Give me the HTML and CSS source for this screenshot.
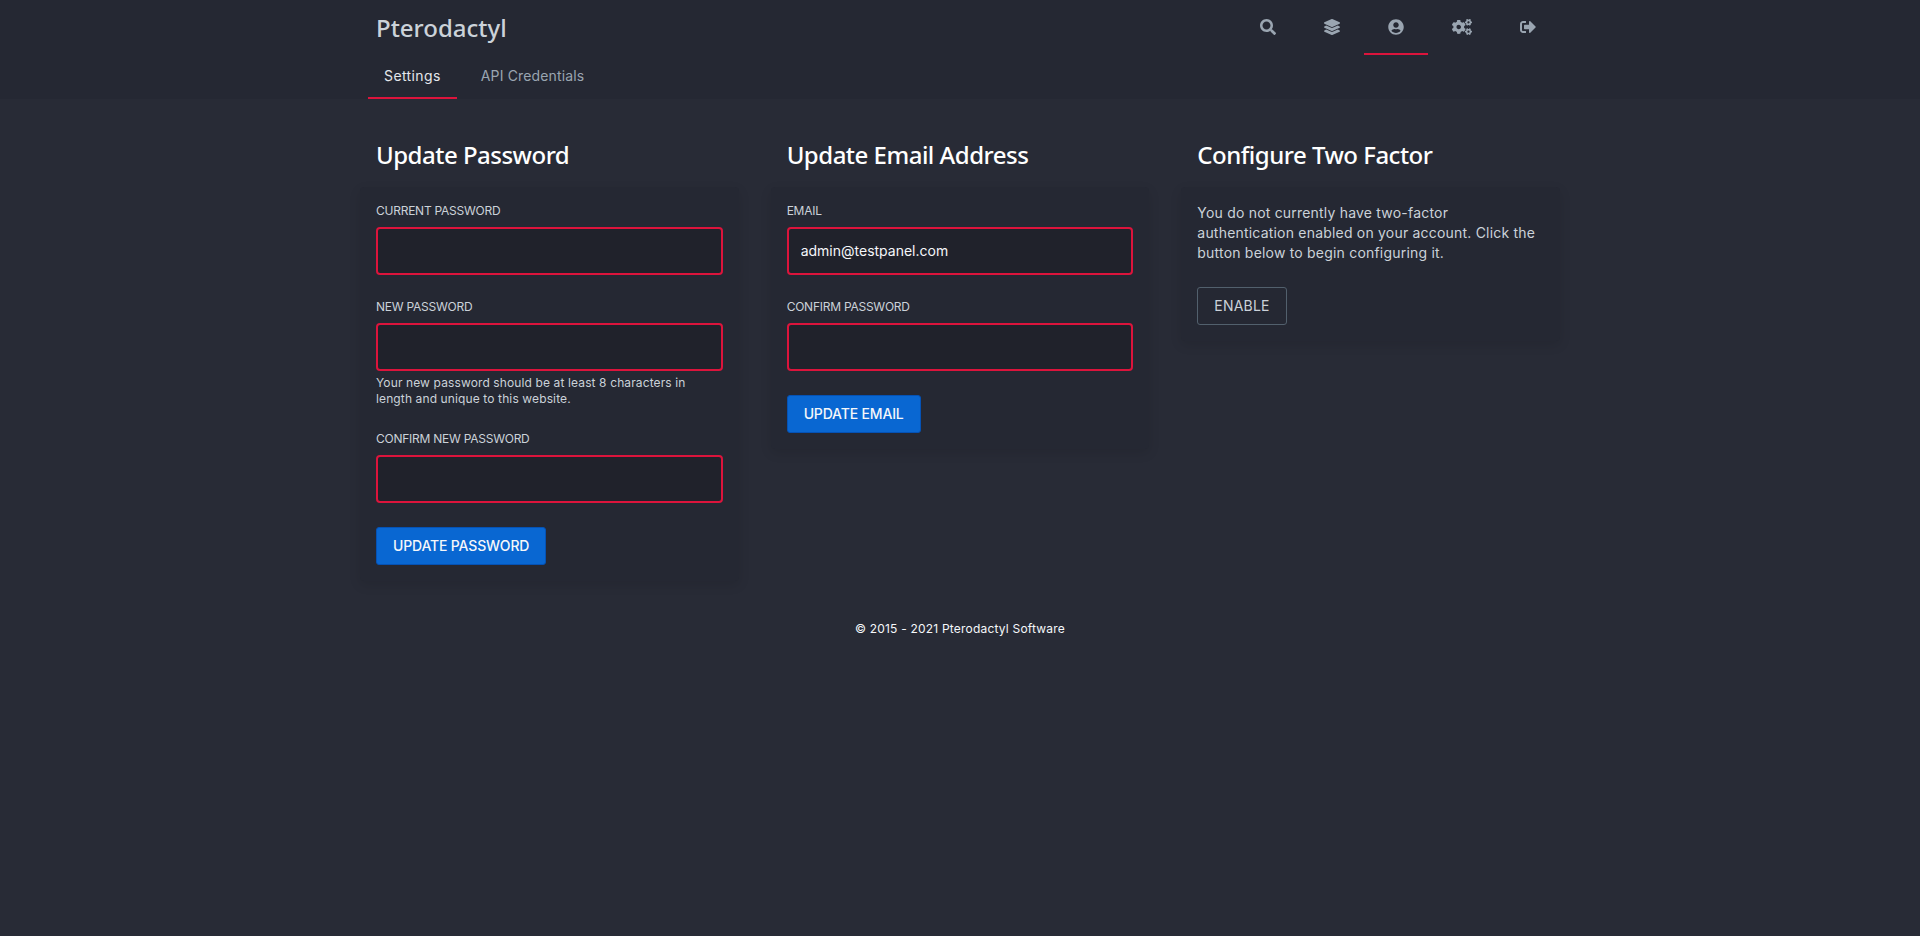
FILE: index.html
```html
<!DOCTYPE html>
<html lang="en">
  <head>
    <meta charset="UTF-8" />
    <meta name="viewport" content="width=device-width, initial-scale=1.0" />
    <title>Pterodactyl</title>
    <link rel="stylesheet" href="styles.css">
  </head>
  <body>
    <header class="topbar">
      <nav class="nav">
        <a class="logo" href="#">Pterodactyl</a>
        <div class="nav-icons">
          <a class="nav-icon" href="#">
            <svg viewBox="0 0 512 512" width="16" height="16"><path d="M505 442.7L405.3 343c-4.5-4.5-10.6-7-17-7H372c27.6-35.3 44-79.7 44-128C416 93.1 322.9 0 208 0S0 93.1 0 208s93.1 208 208 208c48.3 0 92.7-16.4 128-44v16.3c0 6.4 2.5 12.5 7 17l99.7 99.7c9.4 9.4 24.6 9.4 33.9 0l28.3-28.3c9.4-9.4 9.4-24.6.1-34zM208 336c-70.7 0-128-57.2-128-128 0-70.7 57.2-128 128-128 70.7 0 128 57.2 128 128 0 70.7-57.2 128-128 128z"/></svg>
          </a>
          <a class="nav-icon" href="#">
            <svg viewBox="0 0 512 512" width="16" height="16"><path d="M12.41 148.02l232.94 105.67c6.8 3.09 14.49 3.09 21.29 0l232.94-105.67c16.55-7.51 16.55-32.52 0-40.03L266.65 2.31a25.607 25.607 0 0 0-21.29 0L12.41 107.98c-16.55 7.51-16.55 32.53 0 40.04zm487.18 88.28l-58.09-26.33-161.64 73.27c-7.56 3.43-15.59 5.17-23.86 5.17s-16.29-1.74-23.86-5.17L70.51 209.97l-58.1 26.33c-16.55 7.5-16.55 32.5 0 40l232.94 105.59c6.8 3.08 14.49 3.08 21.29 0L499.59 276.3c16.55-7.5 16.55-32.5 0-40zm0 127.8l-57.87-26.23-161.86 73.37c-7.56 3.43-15.59 5.17-23.86 5.17s-16.29-1.74-23.86-5.17L70.29 337.87 12.41 364.1c-16.55 7.5-16.55 32.5 0 40l232.94 105.59c6.8 3.08 14.49 3.08 21.29 0L499.59 404.1c16.55-7.5 16.55-32.5 0-40z"/></svg>
          </a>
          <a class="nav-icon active" href="#">
            <svg viewBox="0 0 496 512" width="16" height="16"><path d="M248 8C111 8 0 119 0 256s111 248 248 248 248-111 248-248S385 8 248 8zm0 96c48.6 0 88 39.4 88 88s-39.4 88-88 88-88-39.4-88-88 39.4-88 88-88zm0 344c-58.7 0-111.3-26.6-146.5-68.2 18.8-35.4 55.6-59.8 98.5-59.8 2.4 0 4.8.4 7.1 1.1 13 4.2 26.6 6.9 40.9 6.9 14.3 0 28-2.7 40.9-6.9 2.3-.7 4.7-1.1 7.1-1.1 42.9 0 79.7 24.4 98.5 59.8C359.3 421.4 306.7 448 248 448z"/></svg>
          </a>
          <a class="nav-icon" href="#">
            <svg viewBox="0 0 640 512" width="20" height="16"><path d="M512.1 191l-8.2 14.3c-3 5.3-9.4 7.5-15.1 5.4-11.8-4.4-22.6-10.7-32.1-18.6-4.6-3.8-5.8-10.5-2.8-15.7l8.2-14.3c-6.9-8-12.3-17.3-15.9-27.4h-16.5c-6 0-11.2-4.3-12.2-10.3-2-12-2.1-24.6 0-37.1 1-6 6.2-10.4 12.2-10.4h16.5c3.6-10.1 9-19.4 15.9-27.4l-8.2-14.3c-3-5.2-1.9-11.9 2.8-15.7 9.5-7.9 20.4-14.2 32.1-18.6 5.7-2.1 12.1.1 15.1 5.4l8.2 14.3c10.5-1.9 21.2-1.9 31.7 0L552 6.3c3-5.3 9.4-7.5 15.1-5.4 11.8 4.4 22.6 10.7 32.1 18.6 4.6 3.8 5.8 10.5 2.8 15.7l-8.2 14.3c6.9 8 12.3 17.3 15.9 27.4h16.5c6 0 11.2 4.3 12.2 10.3 2 12 2.1 24.6 0 37.1-1 6-6.2 10.4-12.2 10.4h-16.5c-3.6 10.1-9 19.4-15.9 27.4l8.2 14.3c3 5.2 1.9 11.9-2.8 15.7-9.5 7.9-20.4 14.2-32.1 18.6-5.7 2.1-12.1-.1-15.1-5.4l-8.2-14.3c-10.4 1.9-21.2 1.9-31.7 0zm-10.5-58.8c38.5 29.6 82.4-14.3 52.8-52.8-38.5-29.7-82.4 14.3-52.8 52.8zM386.3 286.1l33.7 16.8c10.1 5.8 14.5 18.1 10.5 29.1-8.9 24.2-26.4 46.4-42.6 65.8-7.4 8.9-20.2 11.1-30.3 5.3l-29.1-16.8c-16 13.7-34.6 24.6-54.9 31.7v33.6c0 11.6-8.3 21.6-19.7 23.6-24.6 4.2-50.4 4.4-75.9 0-11.5-2-20-11.9-20-23.6V418c-20.3-7.2-38.9-18-54.9-31.7L74 403c-10 5.8-22.9 3.6-30.3-5.3-16.2-19.4-33.3-41.6-42.2-65.7-4-10.9.4-23.2 10.5-29.1l33.3-16.8c-3.9-20.9-3.9-42.4 0-63.4L12 205.8c-10.1-5.8-14.6-18.1-10.5-29 8.9-24.2 26-46.4 42.2-65.8 7.4-8.9 20.2-11.1 30.3-5.3l29.1 16.8c16-13.7 34.6-24.6 54.9-31.7V57.1c0-11.5 8.2-21.5 19.6-23.5 24.6-4.2 50.5-4.4 76-.1 11.5 2 20 11.9 20 23.6v33.6c20.3 7.2 38.9 18 54.9 31.7l29.1-16.8c10-5.8 22.9-3.6 30.3 5.3 16.2 19.4 33.2 41.6 42.1 65.8 4 10.9.1 23.2-10 29.1l-33.7 16.8c3.9 21 3.9 42.5 0 63.5zm-117.6 21.1c59.2-77-28.7-164.9-105.7-105.7-59.2 77 28.7 164.9 105.7 105.7zm243.4 182.7l-8.2 14.3c-3 5.3-9.4 7.5-15.1 5.4-11.8-4.4-22.6-10.7-32.1-18.6-4.6-3.8-5.8-10.5-2.8-15.7l8.2-14.3c-6.9-8-12.3-17.3-15.9-27.4h-16.5c-6 0-11.2-4.3-12.2-10.3-2-12-2.1-24.6 0-37.1 1-6 6.2-10.4 12.2-10.4h16.5c3.6-10.1 9-19.4 15.9-27.4l-8.2-14.3c-3-5.2-1.9-11.9 2.8-15.7 9.5-7.9 20.4-14.2 32.1-18.6 5.7-2.1 12.1.1 15.1 5.4l8.2 14.3c10.5-1.9 21.2-1.9 31.7 0l8.2-14.3c3-5.3 9.4-7.5 15.1-5.4 11.8 4.4 22.6 10.7 32.1 18.6 4.6 3.8 5.8 10.5 2.8 15.7l-8.2 14.3c6.9 8 12.3 17.3 15.9 27.4h16.5c6 0 11.2 4.3 12.2 10.3 2 12 2.1 24.6 0 37.1-1 6-6.2 10.4-12.2 10.4h-16.5c-3.6 10.1-9 19.4-15.9 27.4l8.2 14.3c3 5.2 1.9 11.9-2.8 15.7-9.5 7.9-20.4 14.2-32.1 18.6-5.7 2.1-12.1-.1-15.1-5.4l-8.2-14.3c-10.4 1.9-21.2 1.9-31.7 0zM501.6 431c38.5 29.6 82.4-14.3 52.8-52.8-38.5-29.6-82.4 14.3-52.8 52.8z"/></svg>
          </a>
          <a class="nav-icon" href="#">
            <svg viewBox="0 0 512 512" width="16" height="16"><path d="M497 273L329 441c-15 15-41 4.5-41-17v-96H152c-13.3 0-24-10.7-24-24v-96c0-13.3 10.7-24 24-24h136V88c0-21.4 25.9-32 41-17l168 168c9.3 9.4 9.3 24.6 0 34zM192 436v-40c0-6.6-5.4-12-12-12H96c-17.7 0-32-14.3-32-32V160c0-17.7 14.3-32 32-32h84c6.6 0 12-5.4 12-12V76c0-6.6-5.4-12-12-12H96c-53 0-96 43-96 96v192c0 53 43 96 96 96h84c6.6 0 12-5.4 12-12z"/></svg>
          </a>
        </div>
      </nav>
      <div class="tabs">
        <a class="tab active" href="#">Settings</a>
        <a class="tab" href="#">API Credentials</a>
      </div>
    </header>

    <main class="content">
      <section class="column">
        <h2>Update Password</h2>
        <form class="card">
          <div class="field">
            <label for="current">Current Password</label>
            <input id="current" type="password" />
          </div>
          <div class="field">
            <label for="new">New Password</label>
            <input id="new" type="password" />
            <p class="hint">Your new password should be at least 8 characters in length and unique to this website.</p>
          </div>
          <div class="field">
            <label for="confirm">Confirm New Password</label>
            <input id="confirm" type="password" />
          </div>
          <button class="btn primary" type="button">Update Password</button>
        </form>
      </section>

      <section class="column">
        <h2>Update Email Address</h2>
        <form class="card">
          <div class="field">
            <label for="email">Email</label>
            <input id="email" type="text" value="admin@testpanel.com" />
          </div>
          <div class="field">
            <label for="emailpass">Confirm Password</label>
            <input id="emailpass" type="password" />
          </div>
          <button class="btn primary" type="button">Update Email</button>
        </form>
      </section>

      <section class="column">
        <h2>Configure Two Factor</h2>
        <div class="card">
          <p class="info">You do not currently have two-factor authentication enabled on your account. Click the button below to begin configuring it.</p>
          <button class="btn outline" type="button">Enable</button>
        </div>
      </section>
    </main>

    <footer class="footer">© 2015 - 2021 Pterodactyl Software</footer>
  </body>
</html>
```

FILE: styles.css
```css
* {
  box-sizing: border-box;
}

body {
  margin: 0;
  min-height: 936px;
  background-color: #282b36;
  color: #cbd2d9;
  font-family: "Inter", "Liberation Sans", sans-serif;
}

a {
  color: inherit;
  text-decoration: none;
}

.topbar {
  height: 99px;
  background-color: #252833;
}

.nav {
  width: 1200px;
  height: 55px;
  margin: 0 auto;
  display: flex;
  justify-content: space-between;
}

.logo {
  padding-left: 16px;
  line-height: 55px;
  font-family: "Noto Sans", sans-serif;
  font-size: 24px;
  font-weight: 500;
  color: #cbd2d9;
}

.nav-icons {
  display: flex;
}

.nav-icon {
  display: flex;
  align-items: center;
  padding: 0 24px 1px;
  color: #9aa5b1;
}

.nav-icon svg {
  fill: currentColor;
}

.nav-icon.active {
  box-shadow: inset 0 -2px 0 #dc143c;
}

.tabs {
  width: 1184px;
  height: 44px;
  margin: 0 auto;
  display: flex;
  gap: 8px;
}

.tab {
  padding: 0 16px;
  line-height: 42px;
  font-size: 14px;
  letter-spacing: 0.15px;
  color: #9aa5b1;
}

.tab.active {
  letter-spacing: 0.4px;
  color: #e4e7eb;
  box-shadow: inset 0 -2px 0 #dc143c;
}

.content {
  width: 1200px;
  margin: 40px auto 0;
  display: grid;
  grid-template-columns: repeat(3, 1fr);
  gap: 32px;
  align-items: start;
}

h2 {
  margin: 0 0 16px;
  padding-left: 16px;
  font-family: "Noto Sans", sans-serif;
  font-size: 24px;
  line-height: 32px;
  font-weight: 500;
  letter-spacing: -0.5px;
  color: #fff;
}

.card {
  padding: 16px;
  border-radius: 4px;
  background-color: #252833;
  box-shadow: 0 4px 12px rgba(0, 0, 0, 0.1);
}

.field {
  margin-bottom: 24px;
}

label {
  display: block;
  margin-bottom: 8px;
  font-size: 12px;
  line-height: 16px;
  letter-spacing: -0.25px;
  text-transform: uppercase;
  color: #cbd2d9;
}

input {
  display: block;
  width: 100%;
  height: 48px;
  padding: 0 12px 2px;
  border: 2px solid #dc143c;
  border-radius: 4px;
  outline: none;
  background-color: #20222b;
  color: #f5f7fa;
  font-family: inherit;
  font-size: 14px;
}

.hint {
  margin: 4px 0 0;
  font-size: 12px;
  line-height: 16px;
  letter-spacing: 0.12px;
  color: #cbd2d9;
}

.info {
  margin: 0 0 24px;
  font-size: 14px;
  line-height: 20px;
  letter-spacing: 0.2px;
  color: #cbd2d9;
}

.btn {
  display: block;
  height: 38px;
  padding: 0 16px 1px;
  border: 1px solid;
  border-radius: 3px;
  font-family: inherit;
  font-size: 14px;
  text-transform: uppercase;
}

.primary {
  background-color: #0967d2;
  border-color: #0552b5;
  color: #f5f7fa;
  font-weight: 500;
  letter-spacing: -0.16px;
}

.outline {
  background-color: transparent;
  border-color: #52606d;
  color: #cbd2d9;
  font-weight: 400;
  letter-spacing: 0.2px;
}

.footer {
  margin-top: 40px;
  text-align: center;
  font-size: 12px;
  line-height: 16px;
  letter-spacing: 0.2px;
  color: #f5f7fa;
}
```
